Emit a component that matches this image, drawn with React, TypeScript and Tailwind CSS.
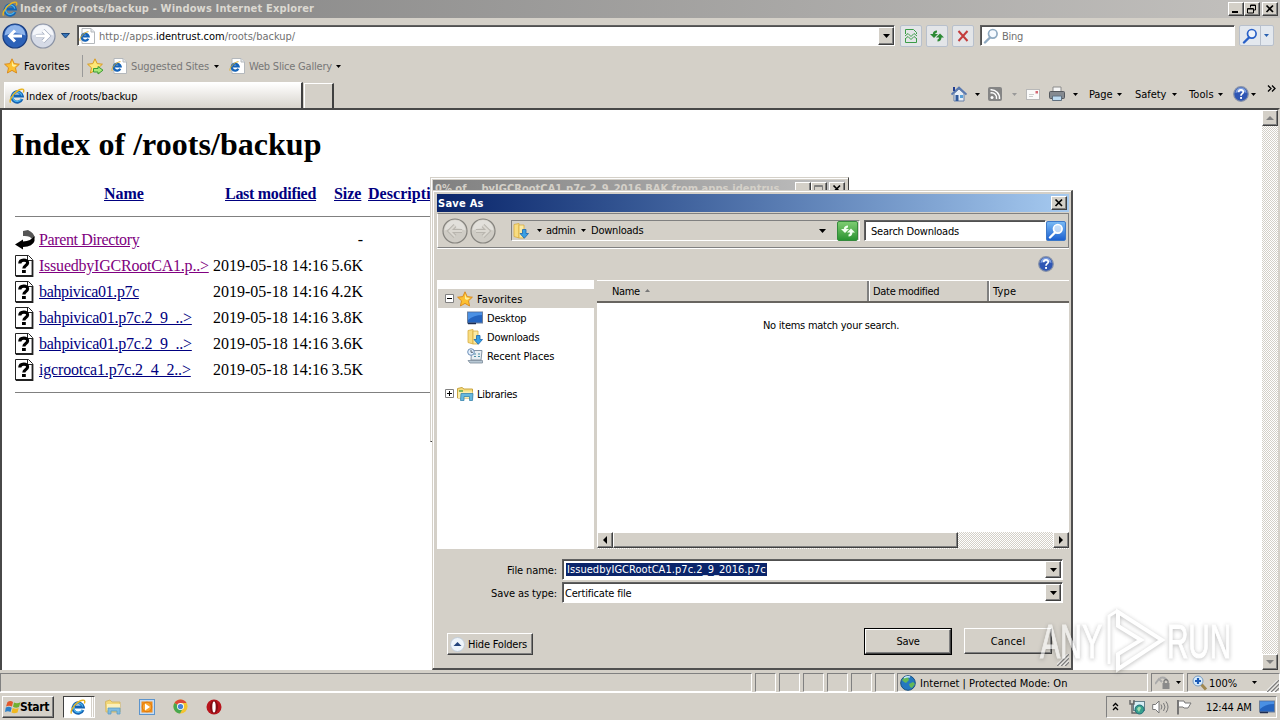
import React from 'react';

type IconProps = { className?: string };

const files = [
  { name: 'IssuedbyIGCRootCA1.p..>', size: '5.6K', color: 'text-[#800080]', tracking: 'tracking-[-0.22px]' },
  { name: 'bahpivica01.p7c', size: '4.2K', color: 'text-[#000080]', tracking: 'tracking-[-0.36px]' },
  { name: 'bahpivica01.p7c.2_9_..>', size: '3.8K', color: 'text-[#000080]', tracking: 'tracking-[-0.24px]' },
  { name: 'bahpivica01.p7c.2_9_..>', size: '3.6K', color: 'text-[#000080]', tracking: 'tracking-[-0.24px]' },
  { name: 'igcrootca1.p7c.2_4_2..>', size: '3.5K', color: 'text-[#000080]', tracking: 'tracking-[-0.17px]' },
];

const raised = 'border border-t-white border-l-white border-r-[#404040] border-b-[#404040] shadow-[inset_-1px_-1px_0_#808080] bg-[#d4d0c8]';
const sunken = 'border border-t-[#808080] border-l-[#808080] border-r-white border-b-white';
const field = 'border border-t-[#606060] border-l-[#606060] border-r-white border-b-white shadow-[inset_1px_1px_0_#505050] bg-white';
const dither = 'bg-[repeating-conic-gradient(#ffffff_0_25%,#d4d0c8_0_50%)] bg-[length:2px_2px]';

function Caret({ className = 'text-black' }: IconProps) {
  return (
    <svg width="5" height="3" viewBox="0 0 5 3" className={`shrink-0 ${className}`}>
      <path d="M0 0H5L2.5 3Z" fill="currentColor" />
    </svg>
  );
}

function BigCaret() {
  return (
    <svg width="7" height="4" viewBox="0 0 7 4">
      <path d="M0 0H7L3.5 4Z" fill="#000" />
    </svg>
  );
}

function IeIcon({ className = 'w-4 h-4' }: IconProps) {
  return (
    <svg viewBox="0 0 16 16" className={`shrink-0 ${className}`}>
      <path d="M13 11A5.2 5.2 0 1 1 13.3 8H5" fill="none" stroke="#1464b4" strokeWidth="3" />
      <path d="M12.3 11A4.7 4.7 0 1 1 12.8 7.6" fill="none" stroke="#4bb4ee" strokeWidth="1.3" />
      <path d="M1.5 14.6C-.5 11 7 2 12.5 1.2c2.6-.4 2.6 1.6 1.8 3.3" fill="none" stroke="#e8b420" strokeWidth="1.4" />
    </svg>
  );
}

function IePage() {
  return (
    <svg width="16" height="16" viewBox="0 0 16 16" className="shrink-0">
      <path d="M3 .5H12L15.5 4V15.5H3Z" fill="#fff" stroke="#b4b8bc" />
      <path d="M12 .5V4H15.5" fill="#e4e8ec" stroke="#b4b8bc" />
      <path d="M9.3 10.7A3.5 3.5 0 1 1 9.6 8.3H4" fill="none" stroke="#1664b8" strokeWidth="2.2" />
      <path d="M1 12.8C0 10 5 4 9.5 3.6" fill="none" stroke="#e0b030" />
    </svg>
  );
}

function Star({ className = 'w-4 h-4' }: IconProps) {
  return (
    <svg viewBox="0 0 16 16" className={`shrink-0 ${className}`}>
      <path d="M8 .8 10.2 5.6 15.4 6.2 11.5 9.8 12.6 15 8 12.4 3.4 15 4.5 9.8.6 6.2 5.8 5.6Z" fill="#fcc030" stroke="#d88618" strokeWidth=".9" />
      <path d="M8 3 9.4 6.6 13 7 10 9 8 8Z" fill="#fff09a" />
    </svg>
  );
}

function StarAdd() {
  return (
    <svg width="18" height="17" viewBox="0 0 18 17" className="shrink-0">
      <path d="M8 .8 10.2 5.6 15.4 6.2 11.5 9.8 12.6 15 8 12.4 3.4 15 4.5 9.8.6 6.2 5.8 5.6Z" fill="#fde878" stroke="#d89a20" />
      <path d="M6.5 10.5H11V8.5L16 12.2 11 16V14H6.5Z" fill="#a8e878" stroke="#3a9a34" />
    </svg>
  );
}

function NavArrow({ dir, tone }: { dir: 'left' | 'right'; tone: 'blue' | 'pale' | 'gray' }) {
  const disc = { blue: '#2d62b8', pale: '#d5dae6', gray: '#cfccc5' }[tone];
  const ring = { blue: '#183c80', pale: '#8a92a4', gray: '#85837e' }[tone];
  const top = { blue: '#8fb4ea', pale: '#f4f6fa', gray: '#e2e0db' }[tone];
  const arrow = dir === 'left' ? 'M20 13H8M13 7.5 7.5 13 13 18.5' : 'M6 13H18M13 7.5 18.5 13 13 18.5';
  return (
    <svg width="26" height="26" viewBox="0 0 26 26" className="shrink-0">
      <circle cx="13" cy="13" r="12" fill={disc} stroke={ring} strokeWidth="1.2" />
      <path d="M2.5 12.5A10.5 10.5 0 0 1 23.5 12.5Q13 8 2.5 12.5" fill={top} />
      {tone !== 'blue' && <path d={arrow} fill="none" stroke={tone === 'gray' ? '#b8b5ae' : '#9aa4b8'} strokeWidth="4" />}
      <path d={arrow} fill="none" stroke={tone === 'gray' ? '#dbd8d1' : '#fff'} strokeWidth={tone === 'gray' ? 2 : 3} />
    </svg>
  );
}

function Magnifier({ color }: { color: string }) {
  return (
    <svg width="16" height="16" viewBox="0 0 16 16" className="shrink-0">
      <path d="M7 9.5 2 14.5" stroke={color} strokeWidth="2.4" strokeLinecap="round" />
      <circle cx="9.8" cy="5.8" r="4.3" fill="#f2f8ff" fillOpacity=".7" stroke={color} strokeWidth="1.7" />
    </svg>
  );
}

function Refresh({ color }: { color: string }) {
  return (
    <svg width="16" height="16" viewBox="0 0 16 16">
      <path d="M5 10 1 6H3.8Q4 2.5 8 2.5V4.5Q6.2 4.5 6.2 6H9Z" fill={color} />
      <path d="M11 5.5 15 9.5H12.5Q12.2 13.5 8.5 13.5V11.5Q10 11.5 10 9.5H7Z" fill={color} />
    </svg>
  );
}

function HelpIcon() {
  return (
    <svg width="16" height="16" viewBox="0 0 16 16" className="shrink-0">
      <circle cx="8" cy="8" r="7.3" fill="#2f56b4" stroke="#8792a8" strokeWidth="1.2" />
      <path d="M2.5 7A5.5 5.5 0 0 1 13.5 7Q8 4.5 2.5 7" fill="#7fa0e0" />
      <path d="M5.7 6.2C5.7 3.1 10.4 3.2 10.3 6 10.2 7.8 8 7.6 8 9.7" fill="none" stroke="#fff" strokeWidth="1.7" />
      <rect x="7.1" y="11" width="1.9" height="1.9" fill="#fff" />
    </svg>
  );
}

function DownloadFolder() {
  return (
    <svg width="16" height="16" viewBox="0 0 16 16" className="shrink-0">
      <path d="M1 1.5 6 .5V15L1 13.5Z" fill="#f8dc80" stroke="#d8ac40" strokeWidth=".8" />
      <path d="M6 2H11V15H6Z" fill="#fbeaa4" stroke="#d8ac40" strokeWidth=".8" />
      <path d="M9.5 6.5H13V10.5H15.5L11.3 15.3 7 10.5H9.5Z" fill="#3aa0e4" stroke="#1866b0" strokeWidth=".8" />
    </svg>
  );
}

function Monitor() {
  return (
    <svg width="16" height="14" viewBox="0 0 16 14" className="shrink-0">
      <rect x=".5" y="1" width="15" height="11" fill="#2464c0" stroke="#6c7f9a" />
      <path d="M1 1.5H15V4Q7 4 1 9Z" fill="#4a90e4" />
      <path d="M1 12.5H9" stroke="#1d2c50" strokeWidth="1.5" />
    </svg>
  );
}

function RecentPlaces() {
  return (
    <svg width="16" height="16" viewBox="0 0 16 16" className="shrink-0">
      <path d="M4.5 2.5H15L14 12H4Z" fill="#e7edf2" stroke="#8494a4" />
      <path d="M7 6H9M11 6H13M7 8.5H9M11 8.5H13" stroke="#4a90a8" strokeWidth="1.2" />
      <path d="M1 12.5H15.5V15H3Z" fill="#b8c8d4" stroke="#7c8c9a" strokeWidth=".8" />
      <circle cx="4" cy="4" r="3.3" fill="#e4f0fc" stroke="#6f90b8" />
      <path d="M4 2V4.3H6" fill="none" stroke="#345" strokeWidth=".8" />
    </svg>
  );
}

function Library() {
  return (
    <svg width="17" height="16" viewBox="0 0 17 16" className="shrink-0">
      <path d="M.5 2.5 5 1.5 7 3H15.5V12H.5Z" fill="#f6dd7c" stroke="#c8a440" />
      <path d="M1 5.5H15.5V12H1Z" fill="#fbefae" />
      <path d="M4 7.5H16L15.5 14.5H12.5V10.5H7V14.5H3.5Z" fill="#66b8e0" stroke="#3884ac" strokeWidth=".8" />
      <path d="M2 5H6" stroke="#58a850" strokeWidth="1.5" />
    </svg>
  );
}

function UnknownFile() {
  return (
    <svg width="20" height="22" viewBox="0 0 20 22">
      <path d="M.5 .5H13.5L17.5 4.5V21H.5Z" fill="#fff" stroke="#222" />
      <path d="M17.5 5V21H1" fill="none" stroke="#222" strokeWidth="1.8" />
      <path d="M12.5 1V5.5H17" fill="none" stroke="#222" />
      <path d="M4.8 8.5C4.8 4 12.8 4 12.6 8 12.4 10.8 9 10.2 8.8 13.5" fill="none" stroke="#000" strokeWidth="3.2" />
      <rect x="7" y="15" width="3.8" height="3" fill="#000" />
    </svg>
  );
}

function BackIcon() {
  return (
    <svg width="20" height="22" viewBox="0 0 20 22">
      <path d="M8 2 13 1Q19.5 4 19.5 9L17 10Q15 6.5 8 7Z" fill="#555" />
      <path d="M0 15.500 8 10.500V12.500Q16 12 19.500 7V12Q18 17.500 8 18V20.500Z" fill="#000" />
    </svg>
  );
}

function WindowGlyph({ kind }: { kind: 'min' | 'restore' | 'max' | 'close' }) {
  return (
    <div className={`flex h-[14px] w-4 items-center justify-center ${raised}`}>
      <svg width="10" height="10" viewBox="0 0 10 10" fill="none" stroke="#000">
        {kind === 'min' && <path d="M1 8H7" strokeWidth="2" />}
        {kind === 'max' && <path d="M.5 1.5H8.5V8.5H.5ZM.5 2.5H8.5" stroke="#808080" />}
        {kind === 'restore' && <path d="M3.5 3.5V1H8.5V6H6.5M.5 4.5H6.5V9H.5ZM3 1.5H9M1 5H6" />}
        {kind === 'close' && <path d="M1.5 1.5 8 8M8 1.5 1.5 8" strokeWidth="1.7" />}
      </svg>
    </div>
  );
}

function Grip() {
  return (
    <svg width="12" height="12" viewBox="0 0 12 12" className="shrink-0">
      <path d="M0 12 12 0M4 12 12 4M8 12 12 8" stroke="#808080" strokeWidth="1.5" />
      <path d="M-1.5 12 10.5 0M2.5 12 12 2.5M6.5 12 12 6.5" stroke="#fff" />
    </svg>
  );
}

function ToolButton({ children }: { children: React.ReactNode }) {
  return (
    <div className="flex h-[22px] w-[22px] items-center justify-center rounded-[2px] border border-[#b8c0cc] bg-[#e3e5e8]">{children}</div>
  );
}

function ScrollButton({ dir }: { dir: 'up' | 'down' | 'left' | 'right' }) {
  const paths = { up: 'M0 6 4 2 8 6Z', down: 'M0 2H8L4 6Z', left: 'M6 0V8L2 4Z', right: 'M2 0V8L6 4Z' };
  return (
    <div className={`flex h-4 w-4 shrink-0 items-center justify-center ${raised}`}>
      <svg width="8" height="8" viewBox="0 0 8 8">
        <path d={paths[dir]} fill={dir === 'up' || dir === 'down' ? '#808080' : '#000'} />
      </svg>
    </div>
  );
}

function BrowserChrome() {
  return (
    <>
      <div className="flex h-[18px] items-center bg-linear-to-r from-[#808080] to-[#c3c1be] pr-[2px] pl-[2px] font-bold text-[#dcd9d2]">
        <IeIcon />
        <span className="ml-[2px] pt-px tracking-[0.16px] whitespace-nowrap">Index of /roots/backup - Windows Internet Explorer</span>
        <div className="ml-auto flex">
          <WindowGlyph kind="min" />
          <WindowGlyph kind="restore" />
          <div className="ml-[2px]"><WindowGlyph kind="close" /></div>
        </div>
      </div>

      <div className="flex h-9 items-center pl-[2px]">
        <NavArrow dir="left" tone="blue" />
        <div className="ml-[2px]"><NavArrow dir="right" tone="pale" /></div>
        <svg width="9" height="6" viewBox="0 0 9 6" className="ml-[5px]">
          <path d="M.5 .5H8.5L4.5 5Z" fill="#3674b8" stroke="#1c4478" />
        </svg>
        <div className={`ml-[7px] flex h-[21px] w-[818px] items-center pl-[1px] ${field}`}>
          <IePage />
          <span className="ml-1 pt-[2px] tracking-[-0.02px] whitespace-nowrap text-[#707070]">
            http://apps.<span className="text-black">identrust.com</span>/roots/backup/
          </span>
          <div className={`ml-auto flex h-[18px] w-4 items-center justify-center ${raised}`}><BigCaret /></div>
        </div>
        <div className="ml-[5px] flex gap-1">
          <ToolButton>
            <svg width="14" height="16" viewBox="0 0 14 16" fill="none" stroke="#3b9c48">
              <path d="M1.5 6V1.5H9.5L12.5 4.5V6M1.5 10V14.5H12.5V10" />
              <path d="M1 8 4 5.5 7 8.5 10 5.5 13 8M1 11 4 8.5 7 11.5 10 8.5 13 11" />
            </svg>
          </ToolButton>
          <ToolButton><Refresh color="#2c8a34" /></ToolButton>
          <ToolButton>
            <svg width="14" height="14" viewBox="0 0 14 14">
              <path d="M2.5 2 11.5 12M11.5 2 2.5 12" stroke="#c43c3c" strokeWidth="2" />
            </svg>
          </ToolButton>
        </div>
        <div className={`ml-[6px] flex h-[21px] w-[255px] items-center pl-[2px] ${field}`}>
          <Magnifier color="#8faac2" />
          <span className="ml-[3px] pt-[2px] text-[#707070]">Bing</span>
        </div>
        <div className="ml-1 flex h-[21px] w-[35px] items-center rounded-[2px] border border-[#b8c0cc] bg-[#e3e8ee] pl-[2px]">
          <Magnifier color="#2860c8" />
          <div className="ml-[2px] flex h-full w-3 items-center justify-center border-l border-[#b8c0cc]"><Caret className="text-[#2860b0]" /></div>
        </div>
      </div>

      <div className="flex h-[26px] items-center pl-[4px] text-[#777] [&_span]:pt-[2px]">
        <Star />
        <span className="ml-1 w-[50px] tracking-[0.12px] text-black">Favorites</span>
        <div className="ml-2 h-[22px] w-px border-l border-[#999] bg-white" />
        <div className="ml-1"><StarAdd /></div>
        <div className="ml-[6px]"><IePage /></div>
        <span className="ml-1 w-[79px] tracking-[-0.12px] whitespace-nowrap">Suggested Sites</span>
        <Caret className="ml-1 text-black" />
        <div className="ml-[10px]"><IePage /></div>
        <span className="ml-1 w-[83px] tracking-[-0.2px] whitespace-nowrap">Web Slice Gallery</span>
        <Caret className="ml-1 text-black" />
      </div>

      <div className="flex h-[29px] items-end pl-1 [&_span]:pt-[2px]">
        <div className="flex h-[26px] w-[299px] items-center border-t border-r-2 border-l border-t-white border-l-white border-r-[#404040] bg-linear-to-b from-white to-[#d8d4cd] pl-1">
          <IeIcon />
          <span className="ml-[1px] tracking-[0.05px]">Index of /roots/backup</span>
        </div>
        <div className="ml-px h-[25px] w-[30px] border-t border-r-2 border-l border-t-white border-l-white border-r-[#404040]" />
        <div className="mb-[3px] ml-auto flex h-[22px] items-center">
          <svg width="16" height="16" viewBox="0 0 16 16">
            <path d="M3 7.5V15H13V7.5L8 3Z" fill="#e8eef6" stroke="#6880a8" />
            <path d="M.5 8.5 8 1.5 15.5 8.5" fill="none" stroke="#5878b0" strokeWidth="1.8" />
            <path d="M3 1V5" stroke="#203c90" strokeWidth="2" />
            <rect x="4.5" y="9" width="3" height="6" fill="#305a9c" />
            <rect x="9" y="9" width="3" height="3" fill="#58a0d8" />
          </svg>
          <Caret className="ml-2" />
          <svg width="14" height="14" viewBox="0 0 14 14" className="ml-[8px]">
            <rect width="14" height="14" rx="2" fill="#858585" />
            <circle cx="4" cy="10.5" r="1.5" fill="#fff" />
            <path d="M2.5 6A5 5 0 0 1 8.5 12M2.5 2.8A8.5 8.5 0 0 1 11.5 12" fill="none" stroke="#fff" strokeWidth="1.5" />
          </svg>
          <Caret className="ml-[10px] text-[#999]" />
          <svg width="14" height="11" viewBox="0 0 14 11" className="ml-[9px]">
            <rect x=".5" y=".5" width="13" height="10" fill="#fafafa" stroke="#b8b8b8" />
            <path d="M3 5.5H8M3 7.5H7" stroke="#ccc" />
            <rect x="9.5" y="2" width="2.5" height="2.5" fill="#d46874" />
          </svg>
          <svg width="16" height="16" viewBox="0 0 16 16" className="ml-[9px]">
            <path d="M4 5V1H12V5" fill="#f6f6f6" stroke="#8b8b8b" />
            <rect x=".5" y="5.5" width="15" height="7" rx="1" fill="#858a90" stroke="#55595e" />
            <path d="M3.5 10H12.5V14.5H3.5Z" fill="#bcdaf0" stroke="#607080" />
          </svg>
          <Caret className="ml-2" />
          <span className="ml-[11px] w-[25px] tracking-[-0.1px]">Page</span><Caret className="ml-[3px]" />
          <span className="ml-[13px] w-[33px] tracking-[-0.05px]">Safety</span><Caret className="ml-1" />
          <span className="ml-[12px] w-[26px] tracking-[0.1px]">Tools</span><Caret className="ml-[3px]" />
          <div className="ml-[10px]"><HelpIcon /></div>
          <Caret className="ml-[2px]" />
          <svg width="9" height="7" viewBox="0 0 9 7" className="mr-1 mb-3 ml-[11px]">
            <path d="M1 .5 4 3.5 1 6.5M5 .5 8 3.5 5 6.5" fill="none" stroke="#000" strokeWidth="1.3" />
          </svg>
        </div>
      </div>
    </>
  );
}

function DirectoryListing() {
  return (
    <div className="w-[560px] overflow-hidden pl-[10px] font-['Liberation_Serif',serif] text-[16px] leading-[20px] tracking-normal text-black">
      <h1 className="mt-[16px] h-9 text-[32px] leading-9 font-bold tracking-[0.03px] whitespace-nowrap">Index of /roots/backup</h1>
      <div className="mt-[22px] ml-[3px]">
        <div className="flex h-5 font-bold tracking-[-0.28px] text-[#000080] underline">
          <span className="ml-[89px] w-[121px] tracking-[-0.05px]">Name</span>
          <span className="w-[109px] whitespace-nowrap">Last modified</span>
          <span className="w-[34px] tracking-[-0.05px]">Size</span>
          <span className="tracking-[0.05px]">Description</span>
        </div>
        <hr className="mt-[12px] mb-[10px] border-t-[1.5px] border-[#808080]" />
        <div className="flex h-[26px] items-center">
          <BackIcon />
          <span className="ml-1 w-[306px] tracking-[-0.37px]"><span className="text-[#800080] underline">Parent Directory</span></span>
          <span className="w-[18px] text-right">-</span>
        </div>
        {files.map((file, i) => (
          <div key={i} className="flex h-[26px] items-center whitespace-nowrap">
            <UnknownFile />
            <div className="ml-1 w-[174px]">
              <span className={`underline ${file.color} ${file.tracking}`}>{file.name}</span>
            </div>
            <span className="w-[114px]">2019-05-18 14:16</span>
            <span className="w-[36px] text-right">{file.size}</span>
          </div>
        ))}
        <hr className="mt-[9px] border-t-[1.5px] border-[#808080]" />
      </div>
    </div>
  );
}

function ComboField({ label, children }: { label: string; children: React.ReactNode }) {
  return (
    <div className="flex h-[21px] items-center">
      <span className="w-[120px] pt-[2px] text-right tracking-[-0.1px]">{label}</span>
      <div className={`ml-[5px] flex h-[21px] w-[501px] items-center pr-px pl-[3px] ${field}`}>
        {children}
        <div className={`ml-auto flex h-[17px] w-4 items-center justify-center ${raised}`}><BigCaret /></div>
      </div>
    </div>
  );
}

function SaveDialog() {
  return (
    <div className="absolute top-[190px] left-[432px] flex h-[480px] w-[641px] flex-col border-t border-r-2 border-b-2 border-l border-t-[#d4d0c8] border-r-[#505050] border-b-[#505050] border-l-[#d4d0c8] bg-[#d4d0c8] pt-[3px] pr-[2px] pl-[4px] shadow-[inset_1px_1px_0_#fff]">
      <div className="flex h-[18px] shrink-0 items-center justify-between bg-linear-to-r from-[#0a246a] to-[#a6caf0] pr-[2px] pl-[1px] font-bold text-white">
        <span className="pt-px tracking-[0.25px]">Save As</span>
        <WindowGlyph kind="close" />
      </div>
      <div className="mt-px flex h-[35px] shrink-0 items-center border border-t-[#808080] border-r-[#808080] border-b-[#808080] border-l-white pl-1 shadow-[0_1px_0_#fff]">
        <NavArrow dir="left" tone="gray" />
        <div className="ml-[2px]"><NavArrow dir="right" tone="gray" /></div>
        <div className={`ml-[15px] flex h-[21px] w-[349px] items-center pl-[1px] ${sunken}`}>
          <DownloadFolder />
          <Caret className="ml-[8px]" />
          <span className="ml-[4px] w-[29px]">admin</span>
          <Caret className="ml-[6px]" />
          <span className="ml-[5px] tracking-[-0.22px]">Downloads</span>
          <div className="mr-[33px] ml-auto"><BigCaret /></div>
        </div>
        <div className="-ml-[23px] flex h-5 w-[21px] items-center justify-center rounded-[2px] border border-[#358a3c] bg-linear-to-b from-[#7ccc70] to-[#289430]"><Refresh color="#f2fff0" /></div>
        <div className={`ml-[6px] flex h-[21px] w-[182px] items-center pl-[6px] ${field}`}><span className="pt-[2px] tracking-[-0.22px]">Search Downloads</span></div>
        <div className="flex h-5 w-5 items-center justify-center rounded-[2px] border border-[#3c78c8] bg-linear-to-b from-[#78b8f4] to-[#1c60d0]"><Magnifier color="#fff" /></div>
      </div>
      <div className="flex h-[32px] shrink-0 items-center justify-end pr-[15px]"><HelpIcon /></div>

      <div className="flex h-[269px] shrink-0 [&_span]:pt-[2px]">
        <div className="w-[157px] bg-white pt-[9px]">
          <div className="ml-[1px] flex h-[19px] items-center bg-[#d4d0c8] pl-[7px]">
            <svg width="9" height="9" viewBox="0 0 9 9"><path d="M.5 .5H8.5V8.5H.5Z" fill="#fff" stroke="#808080" /><path d="M2 4.5H7" stroke="#000" /></svg>
            <Star className="ml-[3px] h-4 w-4" />
            <span className="ml-1 tracking-[0.1px]">Favorites</span>
          </div>
          <div className="flex h-[19px] items-center pl-[30px]"><Monitor /><span className="ml-1 tracking-[-0.2px]">Desktop</span></div>
          <div className="flex h-[19px] items-center pl-[30px]"><DownloadFolder /><span className="ml-1 tracking-[-0.22px]">Downloads</span></div>
          <div className="flex h-[19px] items-center pl-[30px]"><RecentPlaces /><span className="ml-1 tracking-[-0.12px]">Recent Places</span></div>
          <div className="mt-[19px] flex h-[19px] items-center pl-[8px]">
            <svg width="9" height="9" viewBox="0 0 9 9"><path d="M.5 .5H8.5V8.5H.5Z" fill="#fff" stroke="#808080" /><path d="M2 4.5H7M4.5 2V7" stroke="#000" /></svg>
            <div className="ml-[3px]"><Library /></div>
            <span className="ml-[3px]">Libraries</span>
          </div>
        </div>
        <div className="ml-[3px] flex flex-1 flex-col bg-white">
          <div className="flex h-[23px] items-center border-t border-b-2 border-t-white border-b-[#686560] bg-[#d4d0c8]">
            <div className="flex h-full w-[272px] items-center border-r-2 border-[#808080] pl-[15px]">
              <span className="tracking-[-0.4px]">Name</span>
              <svg width="5" height="3" viewBox="0 0 5 3" className="mb-[2px] ml-[5px]"><path d="M0 3H5L2.5 0Z" fill="#777" /></svg>
            </div>
            <div className="flex h-full w-[120px] items-center border-r-2 border-l border-r-[#808080] border-l-white pl-[3px]"><span>Date modified</span></div>
            <div className="flex h-full flex-1 items-center border-l border-white pl-[3px]"><span className="tracking-[0.2px]">Type</span></div>
          </div>
          <div className="flex flex-1 justify-center pt-[14px]"><span className="mr-[4px] tracking-[-0.26px]">No items match your search.</span></div>
          <div className={`flex h-[17px] ${dither}`}>
            <ScrollButton dir="left" />
            <div className={`h-4 w-[345px] ${raised}`} />
            <div className="ml-auto"><ScrollButton dir="right" /></div>
          </div>
        </div>
      </div>

      <div className="mt-[10px] flex flex-col gap-[2px]">
        <ComboField label="File name:"><span className="bg-[#0a246a] pr-px pl-px leading-[13px] tracking-[0.05px] whitespace-nowrap text-white">IssuedbyIGCRootCA1.p7c.2_9_2016.p7c</span></ComboField>
        <ComboField label="Save as type:"><span className="-ml-px pt-[2px] tracking-[-0.2px]">Certificate file</span></ComboField>
      </div>

      <div className="mt-[25px] flex items-start">
        <div className={`mt-[5px] ml-[10px] flex h-[22px] w-[86px] items-center pl-[2px] whitespace-nowrap ${raised}`}>
          <svg width="15" height="15" viewBox="0 0 15 15"><circle cx="7.5" cy="7.5" r="7" fill="#eef4fa" stroke="#c0ccd8" /><path d="M3.5 9 7.5 5 11.5 9Z" fill="#24447c" /></svg>
          <span className="ml-[3px] pt-[2px] tracking-[-0.2px]">Hide Folders</span>
        </div>
        <div className="ml-auto h-[27px] w-[88px] border border-black"><div className={`flex h-full items-center justify-center ${raised}`}>Save</div></div>
        <div className={`mr-[17px] ml-3 flex h-[26px] w-[88px] items-center justify-center tracking-[0.2px] ${raised}`}><span className="pt-px">Cancel</span></div>
      </div>
      <div className="absolute right-[2px] bottom-[2px]"><Grip /></div>
    </div>
  );
}

function StatusBar() {
  return (
    <div className="mt-[3px] flex h-[20px] shrink-0 gap-[3px] border-b border-white [&_span]:pt-[2px]">
      <div className={`w-[752px] ${sunken}`} />
      {[0, 1, 2, 3, 4].map((n) => <div key={n} className={`w-[21px] ${sunken}`} />)}
      <div className={`w-[20px] ${sunken}`} />
      <div className={`-ml-px flex w-[251px] items-center pl-[2px] ${sunken}`}>
        <svg width="16" height="16" viewBox="0 0 16 16">
          <circle cx="8" cy="8" r="7.3" fill="#2478c0" stroke="#195080" />
          <path d="M2 5Q5 1 8 2L9 5 6 8 4 7ZM9 9 13 7 15 9 12 13 10 12Z" fill="#64b858" />
          <path d="M4 3Q7 1 10 2" stroke="#c8eaff" strokeWidth="1.5" fill="none" />
        </svg>
        <span className="ml-1 tracking-[0.02px] whitespace-nowrap">Internet | Protected Mode: On</span>
      </div>
      <div className={`flex w-[33px] items-center pl-[3px] ${sunken}`}>
        <svg width="16" height="14" viewBox="0 0 16 14">
          <path d="M0 8 4 3 7 6M5 2Q10 0 12 5" fill="none" stroke="#aaa" strokeWidth="2" />
          <path d="M9 7V5Q11 2 13 5V7" fill="none" stroke="#777" strokeWidth="1.3" />
          <rect x="7.5" y="7" width="7" height="6" fill="#8a8a8a" />
        </svg>
        <Caret className="ml-[5px]" />
      </div>
      <div className={`flex flex-1 items-center pl-[4px] ${sunken}`}>
        <svg width="16" height="16" viewBox="0 0 16 16">
          <path d="M9 9 14 14.5" stroke="#a08850" strokeWidth="3" />
          <circle cx="6" cy="6" r="5" fill="#d8ecfc" stroke="#7a9cc0" />
          <path d="M6 3V9M3 6H9" stroke="#1c5cb8" strokeWidth="2.2" />
        </svg>
        <span className="ml-px w-7 tracking-[-0.05px]">100%</span>
        <Caret className="ml-[15px]" />
        <div className="mt-[6px] ml-auto"><Grip /></div>
      </div>
    </div>
  );
}

function Explorer() {
  return (
    <svg width="17" height="16" viewBox="0 0 17 16">
      <path d="M.5 2.5 5 1 7 3H15V13H1Z" fill="#f3d878" stroke="#d4b868" />
      <path d="M2 5H15V11H2Z" fill="#fbf0ba" />
      <path d="M3 9H15V15H12V12H6V15H3Z" fill="#80bce0" stroke="#5c9cc4" strokeWidth=".8" />
    </svg>
  );
}

function Taskbar() {
  return (
    <div className="flex h-[27px] shrink-0 items-center pl-[2px]">
      <div className={`flex h-[22px] w-[52px] items-center pl-[2px] font-bold ${raised}`}>
        <svg width="16" height="16" viewBox="0 0 16 16" className="shrink-0">
          <path d="M2.5 3Q5.5 1 8 3L7 7.5Q4 6 1 7.5Z" fill="#e2582c" />
          <path d="M9 3.5Q12 5 15.5 3.2L14 8Q11 9.5 8 7.8Z" fill="#70b030" />
          <path d="M.8 8.5Q4 7 6.7 8.7L5.5 13Q3 11.5 0 13Z" fill="#2c80c8" />
          <path d="M7.7 9Q11 10.5 13.7 9L12.5 13.5Q9 15 6.5 13.5Z" fill="#f0b820" />
        </svg>
        <span className="-ml-px pt-px text-[12px] tracking-[-0.35px]">Start</span>
      </div>
      <div className="ml-[9px] flex h-[22px] w-[32px] border border-t-[#404040] border-r-white border-b-white border-l-[#404040]">
        <div className="flex w-[27px] items-center justify-center bg-white"><IeIcon /></div>
        <div className="ml-px w-px bg-white" />
      </div>
      <div className="ml-[10px] flex items-center gap-[18px]">
        <Explorer />
        <svg width="16" height="16" viewBox="0 0 16 16" className="-ml-px">
          <rect x=".5" y=".5" width="15" height="15" fill="#c6dcf4" stroke="#5c94cc" />
          <rect x="2.5" y="2.5" width="11" height="11" fill="#f08c18" />
          <circle cx="8" cy="8" r="4.8" fill="#f8a430" stroke="#e27808" />
          <path d="M6 4.5 11 8 6 11.5Z" fill="#fff" />
        </svg>
        <svg width="15" height="15" viewBox="0 0 16 16">
          <circle cx="8" cy="8" r="7.5" fill="#f4c430" />
          <path d="M8 8 1.5 4.2A7.5 7.5 0 0 1 14.5 4.2H8Z" fill="#dc4838" />
          <path d="M8 8 1.5 4.2A7.5 7.5 0 0 0 7.5 15.5L11 9Z" fill="#48a850" />
          <circle cx="8" cy="8" r="3.7" fill="#fff" />
          <circle cx="8" cy="8" r="2.8" fill="#4884d8" />
        </svg>
        <svg width="16" height="16" viewBox="0 0 16 16">
          <circle cx="8" cy="8" r="7.5" fill="#b8141c" />
          <ellipse cx="8" cy="8" rx="4" ry="6.5" fill="#820c14" />
          <ellipse cx="8" cy="8" rx="1.7" ry="5.5" fill="#fff" />
        </svg>
      </div>
      <div className={`mr-[3px] ml-auto flex h-[22px] w-[171px] items-center pl-[5px] ${sunken}`}>
        <svg width="7" height="9" viewBox="0 0 7 9"><path d="M1 4 3.5 1.5 6 4M1 8 3.5 5.5 6 8" fill="none" stroke="#000" strokeWidth="1.3" /></svg>
        <svg width="16" height="16" viewBox="0 0 16 16" className="ml-[10px]">
          <rect x="4.5" y="2.5" width="11" height="9" fill="#d7eef4" stroke="#66808a" />
          <path d="M1 1V5H5V1M3 5V14H8" fill="none" stroke="#666" strokeWidth="1.4" />
          <circle cx="10.5" cy="10.5" r="4.5" fill="#38a08c" stroke="#1e6c78" />
          <path d="M8 10Q10 6 12 9L10 13Z" fill="#a4dcb0" />
        </svg>
        <svg width="17" height="16" viewBox="0 0 17 16" className="ml-[7px]" fill="none" stroke="#777">
          <path d="M.7 5.5H3.5L7 2V14L3.5 10.5H.7Z" fill="#fff" />
          <path d="M9 5.5Q10.8 8 9 10.5M11.5 4Q14.5 8 11.5 12M14 2.5Q18 8 14 13.5" />
        </svg>
        <svg width="16" height="16" viewBox="0 0 16 16" className="ml-[7px]">
          <path d="M2 1V15.5" stroke="#666" strokeWidth="1.7" />
          <path d="M2.5 2H8L9 4H15L12 9H8L7 8H2.5Z" fill="#fff" stroke="#777" />
        </svg>
        <span className="ml-[14px] w-[46px] pt-[2px] tracking-[-0.15px] whitespace-nowrap">12:44 AM</span>
        <div className="ml-[7px]"><Monitor /></div>
      </div>
    </div>
  );
}

function Watermark() {
  return (
    <div className="pointer-events-none absolute top-[600px] left-[1034px] opacity-60">
      <svg width="230" height="84" viewBox="0 0 230 84" className="overflow-visible drop-shadow-[0_1px_2px_rgba(70,70,70,0.6)]">
        <g fill="#fff" stroke="#fff" fontFamily="Liberation Sans Narrow, Liberation Sans, sans-serif" fontSize="48">
          <text x="6" y="58" textLength="62" lengthAdjust="spacingAndGlyphs">ANY</text>
          <text x="133" y="58" textLength="64" lengthAdjust="spacingAndGlyphs">RUN</text>
        </g>
        <path d="M84 12 128 40 84 69V54L107 40 84 26Z" fill="none" stroke="#fff" strokeWidth="4" />
        <path d="M75 64V16L83 11" fill="none" stroke="#fff" strokeWidth="3" />
      </svg>
    </div>
  );
}

export default function App() {
  return (
    <div className="relative flex h-[720px] w-[1280px] flex-col overflow-hidden bg-[#d4d0c8] font-['DejaVu_Sans_Condensed','DejaVu_Sans',sans-serif] text-[11px] leading-[14px] tracking-[-0.3px] text-black [font-stretch:condensed]">
      <BrowserChrome />
      <div className="flex h-[562px] shrink-0 justify-between border-t-2 border-r-2 border-l-2 border-t-[#484848] border-r-[#d4d0c8] border-l-[#484848] bg-white">
        <DirectoryListing />
        <div className={`flex w-4 flex-col justify-between ${dither}`}>
          <ScrollButton dir="up" />
          <ScrollButton dir="down" />
        </div>
      </div>
      <StatusBar />
      <Taskbar />

      {/* download progress window, mostly hidden by the dialog */}
      <div className="absolute top-[177px] left-[430px] h-[265px] w-[419px] border border-t-[#d4d0c8] border-r-[#404040] border-b-[#404040] border-l-[#d4d0c8] bg-[#d4d0c8] pt-[2px] pr-[3px] pl-[2px] shadow-[inset_1px_1px_0_#fff]">
        <div className="flex h-[18px] items-center bg-linear-to-r from-[#808080] to-[#c0c0c0] pl-[2px] font-bold whitespace-nowrap text-[#d4d0c8]">
          <span className="tracking-[0.04px]">0% of ...byIGCRootCA1.p7c.2_9_2016.BAK from apps.identrus...</span>
          <div className="ml-auto flex">
            <WindowGlyph kind="min" />
            <WindowGlyph kind="max" />
            <div className="ml-[2px]"><WindowGlyph kind="close" /></div>
          </div>
        </div>
      </div>
      <SaveDialog />
      <Watermark />
    </div>
  );
}
